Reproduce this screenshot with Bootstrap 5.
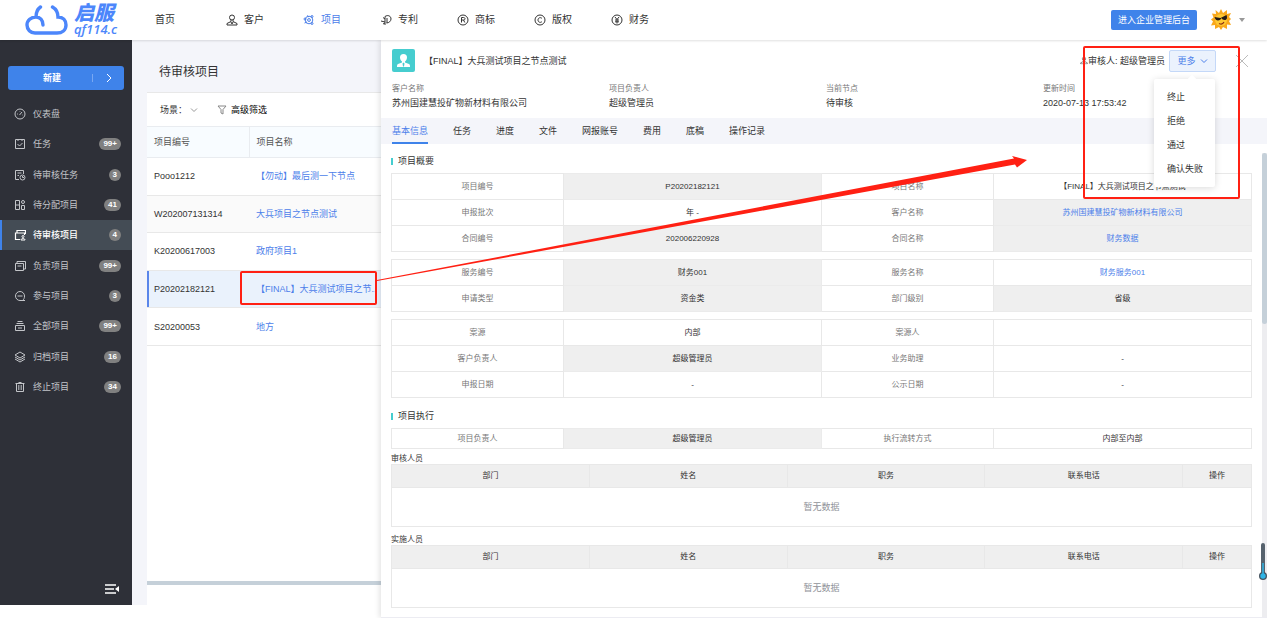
<!DOCTYPE html>
<html lang="zh-CN">
<head>
<meta charset="utf-8">
<meta name="viewport" content="width=device-width, initial-scale=1">
<title>待审核项目</title>
<link rel="stylesheet" href="https://cdn.jsdelivr.net/npm/bootstrap@5.3.0/dist/css/bootstrap.min.css">
<style>
:root{--blue:#3f83ea;--link:#4c80ea;--line:#e8e8e8;--grey:#efefef;--teal:#46cdcf;--thumb:#c5d0d9;--red:#ff2013}
body{font-family:"Liberation Sans","Noto Sans CJK SC",sans-serif;font-size:9px;line-height:14px;color:#333;background:#fff}
a{text-decoration:none;color:inherit}
table a,table a:hover{color:var(--link)}
svg{display:block;flex:none}
.ico{width:12px;height:12px;fill:none;stroke:currentColor;stroke-width:1}

.topbar{height:40px;box-shadow:0 1px 2px #0000001f;position:relative;z-index:3;padding:0 22px 0 24px}
.brand{color:#4c86fb;width:120px;gap:6px}
.brand-cn{font-size:20px;line-height:18px;font-weight:900;font-style:italic}
.brand-en{font:italic 600 13px/14px "Open Sans",sans-serif}
.mainnav{font-size:10px;gap:39px}
.mainnav a{gap:6px}
.mainnav a:first-child{margin-right:12px;margin-left:11px}
.mainnav .on{color:var(--link)}
.btn-admin{height:20px;width:86px;padding:0;font-size:9px;line-height:18px;border-radius:2px;background:var(--blue);color:#fff;border:0}
.avatar-btn{background:none;border:0;padding:0;margin-left:14px;gap:8px}
.caret{border:3px solid transparent;border-top:4px solid #999;border-bottom:0;width:6px}

.shell{margin-bottom:13px}
.side{width:132px;background:#2e3038;color:#c3c5c9;padding-top:26px}
.new-btn{margin:0 8px;height:24px;background:var(--blue);color:#fff;border:0;border-radius:3px;padding:0;font-weight:700}
.new-btn i{width:1px;height:8px;background:#79a8f2}
.new-btn span:first-child{width:84px;text-align:center;padding-left:4px}
.new-btn .arr{flex:1}
.menu{display:grid;grid-template-rows:repeat(10,1fr);height:303px;margin-top:9px}
.menu a{padding:0 11px 0 12px;border-left:2px solid transparent;gap:7px}
.menu .on{background:#444c55;border-color:var(--blue);color:#fff;font-weight:500}
.count{margin-left:auto;background:#808080;color:#fff;border-radius:6px;height:12px;line-height:12px;font-size:8px;font-weight:700;padding:0 4px;min-width:12px}
.fold{background:none;border:0;padding:0;color:#fff;margin:auto 12px 11px auto}

.listcol{flex:0 0 249px;background:#f4f5fa;padding-left:15px;min-width:0}
.listcol h1{font-size:12px;line-height:16px;font-weight:400;margin:0;padding:24px 12px 12px}
.panel{background:#fff;border-top:1px solid var(--line)}
.filters{height:33px;padding-left:13px;gap:3px}
.filters button{background:none;border:0;padding:0}
.grid-list{table-layout:fixed;width:100%;height:220px;border-collapse:collapse}
.grid-list th{height:31px;background:#f8fcff;font-weight:400;color:#555;border:solid #e9ecf0;border-width:1px 0}
.grid-list th+th{border-left-width:1px}
.grid-list th,.grid-list td{padding:0 0 0 7px}
.grid-list td{border-bottom:1px solid var(--line);white-space:nowrap;height:37px}
.grid-list th:first-child{width:102px}
.grid-list tr.alt td{background:#fafafa}
.grid-list tr.sel td{background:#eaf2fc}
.grid-list tr.sel td:first-child{box-shadow:inset 2px 0 #5b86ea}
.hbar{height:4px;background:var(--thumb);margin:auto 0 20px}
.mark-row{position:absolute;inset:0 4px 2px -9px;border:2px solid var(--red);border-radius:2px}

.drawer{flex:1;min-width:0;margin-bottom:-13px;background:#fff;box-shadow:-2px 0 5px #0000001a;border-bottom:1px solid #ececf2;z-index:2}
.dhead{padding:9px 18px 0 11px;height:32px}
.dicon{width:23px;height:23px;border-radius:2px;background:var(--teal)}
.dhead h2{font-size:9px;line-height:14px;font-weight:400;margin:0 auto 0 9px}
.more-btn{width:47px;height:22px;background:#ebf2fd;border:1px solid #c4d8f8;color:var(--link);border-radius:2px;padding:0;gap:4px}
.close-x{background:none;border:0;padding:0;margin-left:19px;color:#bbb}
.pop{position:absolute;top:39px;right:52px;width:61px;background:#fff;border-radius:2px;box-shadow:0 1px 7px #00000026;padding:6px 0;z-index:5}
.pop::before{content:"";position:absolute;top:-3px;left:35px;width:6px;height:6px;background:#fff;transform:rotate(45deg)}
.pop a{display:block;height:24px;line-height:24px;padding-left:13px}
.meta{margin:10px 7px 0 11px}
.meta dt{font-size:8px;line-height:14px;font-weight:400;color:#777}
.meta dd{line-height:14px;margin:0}
.tabs{background:#f4f5fa;height:26px;margin-top:8px;padding-left:11px;gap:25px}
.tabs a{line-height:26px}
.tabs .on{color:var(--link);box-shadow:inset 0 -2px var(--blue)}
.dbody{padding:10px 15px 9px 10px}
.sec{font-size:9px;line-height:14px;font-weight:400;margin:0 0 5px;gap:5px}
.sec::before{content:"";width:2px;height:7px;background:var(--teal)}
.dbody table{width:100%;table-layout:fixed;border-collapse:collapse;font-size:8px;line-height:12px;text-align:center}
.dbody th,.dbody td{border:1px solid var(--line);padding:0;font-weight:400;height:26px}
.info{margin-bottom:7px}
.info th{width:20%;color:#777}
.info td{width:30%}
.info .g{background:var(--grey);border-color:#ebebeb}
.info.slim{margin-bottom:4px}
.info.slim th,.info.slim td{height:20px}
.people caption{caption-side:top;padding:0;font-size:8px;line-height:12px;height:11px;color:#333}
.people th{background:var(--grey);height:23px;width:23%}
.people th:last-child{width:auto}
.people td{height:39px;font-size:9px;color:#909399}
.people+.people{margin-top:7px}
.vtrack{position:absolute;right:0;top:113px;bottom:0;width:5px;background:#ededf0}
.vtrack i{display:block;height:171px;background:var(--thumb);border-radius:3px}
.thermo{position:absolute;right:0;bottom:37px}
.mark-more{position:absolute;top:6px;right:27px;width:157px;height:153px;border:2px solid var(--red);border-radius:2px;pointer-events:none;z-index:4}
.arrow{position:absolute;left:-4px;top:115px;width:calc(100% - 236px);height:126px;pointer-events:none;z-index:4}
</style>
</head>
<body>
<svg width="0" height="0" class="position-absolute" aria-hidden="true">
  <symbol id="down" viewBox="0 0 8 8"><path d="M1 2.500 4 5.500 7 2.500"/></symbol>
  <symbol id="user" viewBox="0 0 12 12"><circle cx="6" cy="3.500" r="2.500"/><path d="M5 6v1.500L1 9.500V11h10V9.500L7 7.500V6M5 8l1 2 1-2"/></symbol>
</svg>

<header class="topbar d-flex align-items-center bg-white">
  <a href="#" class="brand d-flex align-items-center">
    <svg width="44" height="30" viewBox="0 0 44 30" fill="none" stroke="#4c86fb" stroke-width="3.400" stroke-linecap="round"><path d="M19 20c0-5-3-8-7-8-5 0-9 3.500-9 8s3.500 8 8 8h22c5 0 9-3 9-8 0-5-3-8-8-8 0-5-2-8-5.500-10M12 12c0-5 1-7.500 4.500-10"/></svg>
    <span class="d-flex flex-column"><span class="brand-cn">启服</span><span class="brand-en">qf114.c</span></span>
  </a>
  <nav class="mainnav d-flex">
    <a href="#">首页</a>
    <a href="#" class="d-flex align-items-center"><svg class="ico"><use href="#user"/></svg>客户</a>
    <a href="#" class="on d-flex align-items-center"><svg class="ico" viewBox="0 0 12 12"><circle cx="6" cy="6" r="3.800"/><circle cx="6" cy="6" r="1.400"/><circle cx="2" cy="5" r="1"/><circle cx="9" cy="2.500" r="1"/><circle cx="9" cy="9.500" r="1"/><path d="M4 1.500 6 3M1.500 9 4 8"/></svg>项目</a>
    <a href="#" class="d-flex align-items-center"><svg class="ico" viewBox="0 0 12 12"><path d="M5 11V2.500C8 .5 11 2 11 5c0 2-2 4-4.500 4"/><path d="M5 5 3 3.500M5 8 1 7M3 10l2-1M7 4v5"/></svg>专利</a>
    <a href="#" class="d-flex align-items-center"><svg class="ico" viewBox="0 0 12 12"><circle cx="6" cy="6" r="5"/><path d="M4.500 8.500v-5h2c2 0 2 2.500 0 2.500h-2M6.500 6l1.300 2.500"/></svg>商标</a>
    <a href="#" class="d-flex align-items-center"><svg class="ico" viewBox="0 0 12 12"><circle cx="6" cy="6" r="5"/><path d="M8 4.500C6.800 3 4 3.500 4 6s2.800 3 4 1.500"/></svg>版权</a>
    <a href="#" class="d-flex align-items-center"><svg class="ico" viewBox="0 0 12 12"><circle cx="6" cy="6" r="5"/><path d="m4 3 2 2.500L8 3M6 5.500V9.500M4 6h4M4 7.800h4"/></svg>财务</a>
  </nav>
  <button type="button" class="btn btn-admin ms-auto">进入企业管理后台</button>
  <button type="button" class="avatar-btn d-flex align-items-center" aria-label="用户菜单">
    <svg width="20" height="22" viewBox="0 0 20 22"><path fill="#f9a81b" d="m10 0 2 4 4-3v4l4-1-2 4 2 2-2 2 2 4-4-.5V20l-4-2-2 3-2-3-4 2v-4l-4 .5 2-4-2-2 2.500-2L1 4.500 5 5l-.5-4L8 4z"/><circle cx="10" cy="11" r="6" fill="#ffc933"/><path fill="#251b16" d="m3.500 8 6 1 6-3c1 3 .5 5-2 5-1.500 0-2.500-.8-3-2-1 3-6 4-7-1z"/><path d="M8 14.500c2 1 4 .5 5-1.500" fill="none" stroke="#8b2c12" stroke-width="1.200"/></svg>
    <span class="caret"></span>
  </button>
</header>

<div class="shell d-flex">
  <aside class="side d-flex flex-column">
    <button type="button" class="new-btn d-flex align-items-center"><span>新建</span><i></i><span class="arr d-flex justify-content-center"><svg width="8" height="10" viewBox="0 0 8 10" fill="none" stroke="#fff"><path d="m2 1 4 4-4 4"/></svg></span></button>
    <nav class="menu">
      <a href="#" class="d-flex align-items-center"><svg class="ico" viewBox="0 0 12 12"><circle cx="6" cy="6" r="5"/><path d="M5.500 7 8 4M3 6h.8M6 3v.5M8.500 7H9"/></svg>仪表盘</a>
      <a href="#" class="d-flex align-items-center"><svg class="ico" viewBox="0 0 12 12"><path d="M1.500 1.500h9v9h-9zM4 1v2M8 1v2M3.500 6 5.500 8l3-3"/></svg>任务<span class="count">99+</span></a>
      <a href="#" class="d-flex align-items-center"><svg class="ico" viewBox="0 0 12 12"><path d="M5 10.500H1.500v-9h8V5M3.500 4h4M3.500 6.500H5"/><circle cx="8.500" cy="8.500" r="2.500"/><path d="M8.500 7v1.500H10"/></svg>待审核任务<span class="count">3</span></a>
      <a href="#" class="d-flex align-items-center"><svg class="ico" viewBox="0 0 12 12"><path d="M1.500 1.500h4v9h-4zM1.500 6h4M7.500 6.500h3v4h-3z"/><circle cx="9" cy="3" r="1.500"/></svg>待分配项目<span class="count">41</span></a>
      <a href="#" class="on d-flex align-items-center" aria-current="page"><svg class="ico" viewBox="0 0 12 12"><path d="M6 10.500H1.500V4h9v2M3 4V1.500h8.500V5" stroke-width="1.200"/><circle cx="9" cy="7.500" r="1"/><path d="M7 11c0-2 4-2 4 0z"/></svg>待审核项目<span class="count">4</span></a>
      <a href="#" class="d-flex align-items-center"><svg class="ico" viewBox="0 0 12 12"><path d="M1.500 3.500h8v7h-8zM3 3.500v-2h8.500V9H9.500M3.500 6h4"/></svg>负责项目<span class="count">99+</span></a>
      <a href="#" class="d-flex align-items-center"><svg class="ico" viewBox="0 0 12 12"><path d="M11 10.500H6A4.500 4.500 0 1 1 10.500 6c0 2-.5 3-1.500 4M3.500 6h5"/></svg>参与项目<span class="count">3</span></a>
      <a href="#" class="d-flex align-items-center"><svg class="ico" viewBox="0 0 12 12"><path d="M1.500 5.500h9v5h-9zM2.500 3.500h7M3.500 1.500h5M4 8h4"/></svg>全部项目<span class="count">99+</span></a>
      <a href="#" class="d-flex align-items-center"><svg class="ico" viewBox="0 0 12 12"><path d="m6 1 5 3-5 3-5-3zM1 6l5 3 5-3M1 8l5 3 5-3"/></svg>归档项目<span class="count">16</span></a>
      <a href="#" class="d-flex align-items-center"><svg class="ico" viewBox="0 0 12 12"><path d="M1.500 2.500h9M2.500 2.500v8h7v-8M4.500 1.500h3M4.800 4v5M7.200 4v5"/></svg>终止项目<span class="count">34</span></a>
    </nav>
    <button type="button" class="fold" aria-label="收起菜单"><svg width="15" height="10" viewBox="0 0 15 10" stroke="#fff" stroke-width="1.300"><path d="M0 1h11M0 5h9M0 9h11"/><path d="M14 2v6l-4-3z" fill="#fff" stroke="none"/></svg></button>
  </aside>

  <main class="listcol d-flex flex-column">
    <h1>待审核项目</h1>
    <div class="panel flex-grow-1 d-flex flex-column">
      <div class="filters d-flex align-items-center">
        <span>场景：</span>
        <button type="button" aria-label="选择场景" class="me-3"><svg width="8" height="8" fill="none" stroke="#999"><use href="#down"/></svg></button>
        <button type="button" class="d-flex align-items-center"><svg width="10" height="10" viewBox="0 0 10 10" fill="none" stroke="#888" class="me-1"><path d="M1 1h8L6 4.500V9L4 8V4.500z"/></svg>高级筛选</button>
      </div>
      <table class="grid-list">
        <thead><tr><th>项目编号</th><th>项目名称</th></tr></thead>
        <tbody>
          <tr><td>Pooo1212</td><td><a href="#">【勿动】最后测一下节点</a></td></tr>
          <tr class="alt"><td>W202007131314</td><td><a href="#">大兵项目之节点测试</a></td></tr>
          <tr><td>K20200617003</td><td><a href="#">政府项目1</a></td></tr>
          <tr class="sel"><td>P20202182121</td><td class="position-relative"><a href="#">【FINAL】大兵测试项目之节..</a><span class="mark-row"></span></td></tr>
          <tr><td>S20200053</td><td><a href="#">地方</a></td></tr>
        </tbody>
      </table>
      <div class="hbar"></div>
    </div>
  </main>

  <section class="drawer position-relative">
    <div class="dhead d-flex align-items-center">
      <div class="dicon d-flex align-items-center justify-content-center"><svg width="15" height="15" viewBox="0 0 15 15" fill="#fff"><path d="M4 4.500a3.500 3.500 0 0 1 7 0C11 7 9.500 8 9 8.500v1l4 1.500c1 .5 1 1.500 1 3H1c0-1.500 0-2.500 1-3l4-1.500v-1C5.500 8 4 7 4 4.500z"/><path d="m7.500 9.500-1 1 .5 3h1l.5-3z" fill="#46cdcf"/></svg></div>
      <h2>【FINAL】大兵测试项目之节点测试</h2>
      <svg width="8" height="9" viewBox="0 0 12 12" fill="none" stroke="#555"><use href="#user"/></svg>
      <span class="me-1">审核人: 超级管理员</span>
      <button type="button" class="more-btn d-flex align-items-center justify-content-center" aria-expanded="true">更多<svg width="8" height="8" fill="none" stroke="currentColor"><use href="#down"/></svg></button>
      <button type="button" class="close-x" aria-label="关闭"><svg width="14" height="14" viewBox="0 0 14 14" stroke="currentColor"><path d="m1 1 12 12M13 1 1 13"/></svg></button>
    </div>
    <nav class="pop"><a href="#">终止</a><a href="#">拒绝</a><a href="#">通过</a><a href="#">确认失败</a></nav>

    <dl class="meta row g-0 mb-0">
      <div class="col-3"><dt>客户名称</dt><dd>苏州国建慧投矿物新材料有限公司</dd></div>
      <div class="col-3"><dt>项目负责人</dt><dd>超级管理员</dd></div>
      <div class="col-3"><dt>当前节点</dt><dd>待审核</dd></div>
      <div class="col-3"><dt>更新时间</dt><dd>2020-07-13 17:53:42</dd></div>
    </dl>
    <nav class="tabs d-flex">
      <a href="#" class="on">基本信息</a><a href="#">任务</a><a href="#">进度</a><a href="#">文件</a><a href="#">网报账号</a><a href="#">费用</a><a href="#">底稿</a><a href="#">操作记录</a>
    </nav>

    <div class="dbody">
      <h3 class="sec d-flex align-items-center">项目概要</h3>
      <table class="info">
        <tr><th>项目编号</th><td class="g">P20202182121</td><th>项目名称</th><td>【FINAL】大兵测试项目之节点测试</td></tr>
        <tr><th>申报批次</th><td>年 -</td><th>客户名称</th><td class="g"><a href="#">苏州国建慧投矿物新材料有限公司</a></td></tr>
        <tr><th>合同编号</th><td class="g">202006220928</td><th>合同名称</th><td class="g"><a href="#">财务数据</a></td></tr>
      </table>
      <table class="info">
        <tr><th>服务编号</th><td class="g">财务001</td><th>服务名称</th><td><a href="#">财务服务001</a></td></tr>
        <tr><th>申请类型</th><td class="g">资金类</td><th>部门级别</th><td class="g">省级</td></tr>
      </table>
      <table class="info">
        <tr><th>案源</th><td>内部</td><th>案源人</th><td></td></tr>
        <tr><th>客户负责人</th><td class="g">超级管理员</td><th>业务助理</th><td>-</td></tr>
        <tr><th>申报日期</th><td>-</td><th>公示日期</th><td>-</td></tr>
      </table>
      <h3 class="sec d-flex align-items-center pt-1">项目执行</h3>
      <table class="info slim">
        <tr><th>项目负责人</th><td class="g">超级管理员</td><th>执行流转方式</th><td>内部至内部</td></tr>
      </table>
      <table class="people">
        <caption>审核人员</caption>
        <thead><tr><th>部门</th><th>姓名</th><th>职务</th><th>联系电话</th><th>操作</th></tr></thead>
        <tbody><tr><td colspan="5">暂无数据</td></tr></tbody>
      </table>
      <table class="people">
        <caption>实施人员</caption>
        <thead><tr><th>部门</th><th>姓名</th><th>职务</th><th>联系电话</th><th>操作</th></tr></thead>
        <tbody><tr><td colspan="5">暂无数据</td></tr></tbody>
      </table>
    </div>

    <div class="vtrack"><i></i></div>
    <svg class="thermo" width="8" height="37" viewBox="0 0 8 37"><path d="M2 2a2 2 0 0 1 4 0v28H2z" fill="#56626d"/><circle cx="4" cy="33" r="4" fill="#44535f"/><path d="M4 20v12" stroke="#2fb4e6" stroke-width="1.500"/><circle cx="4" cy="33" r="2.700" fill="#2fb4e6"/></svg>
    <div class="mark-more"></div>
    <svg class="arrow" viewBox="0 0 650 126" preserveAspectRatio="none" fill="#ff2013"><path d="M0 125 637 3.500 635 1 650 5 640 12.500 638 9.500 0 126z"/></svg>
  </section>
</div>
<script src="https://cdn.jsdelivr.net/npm/bootstrap@5.3.0/dist/js/bootstrap.bundle.min.js"></script>
</body>
</html>
